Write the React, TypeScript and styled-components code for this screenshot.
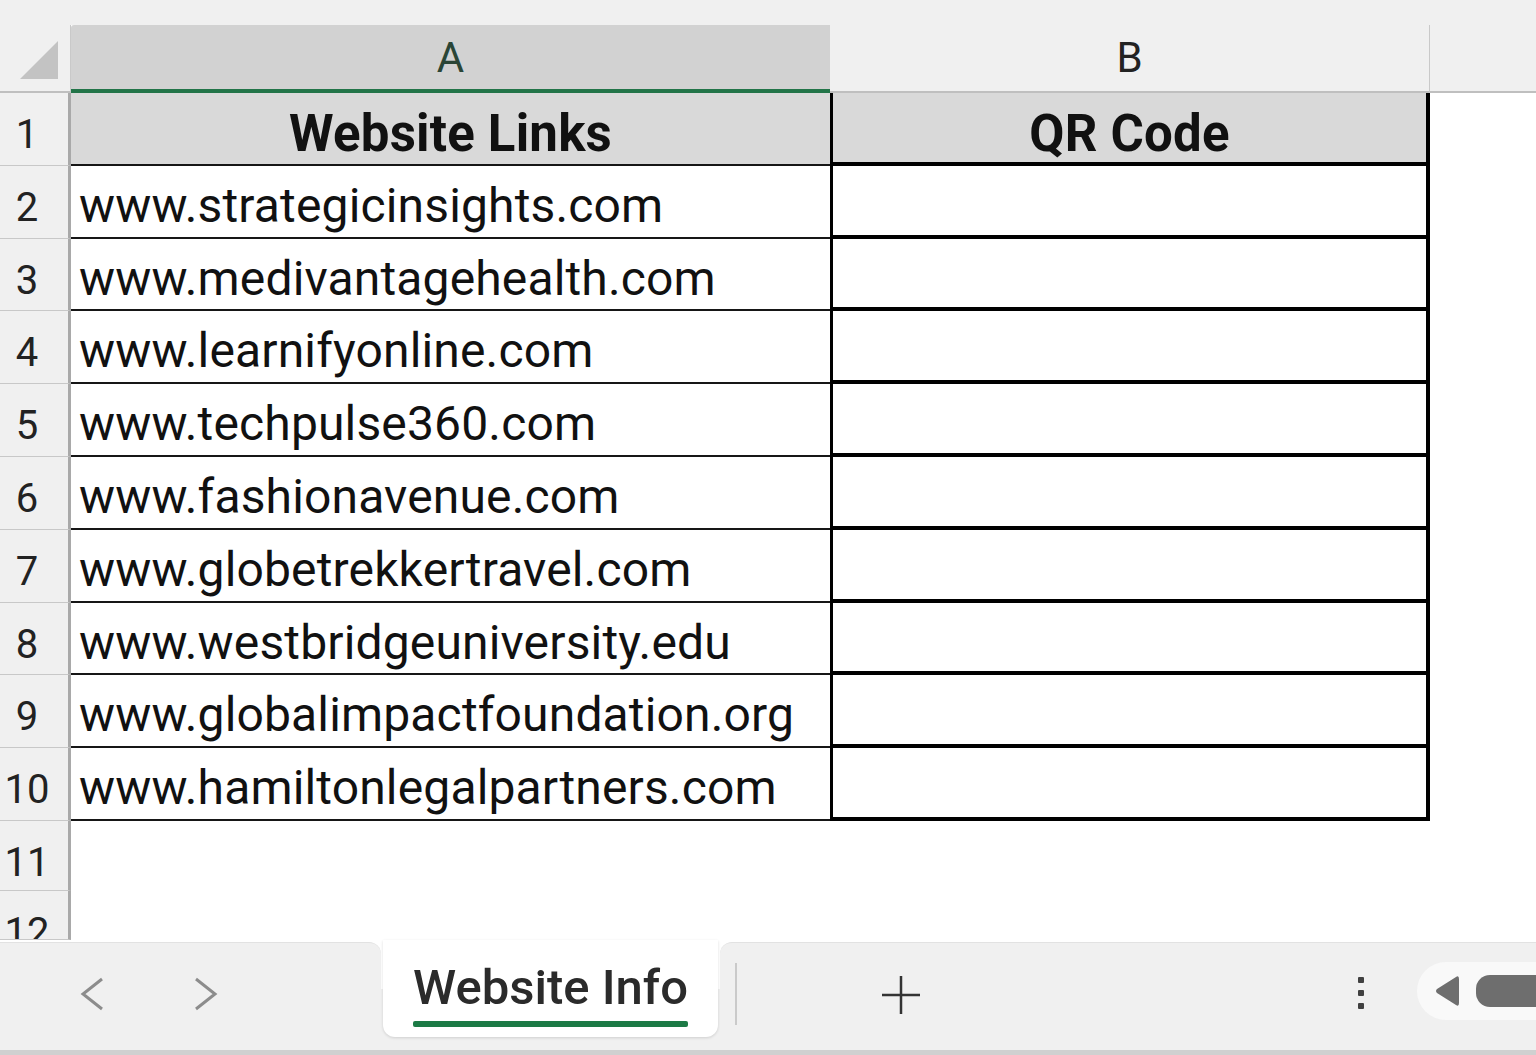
import React from 'react';
import styled, { createGlobalStyle } from 'styled-components';

const GlobalStyle = createGlobalStyle`
  html, body { margin: 0; padding: 0; background: #fff; }
  body { font-family: Roboto, "Noto Sans", "Liberation Sans", sans-serif; overflow: hidden; }
  * { box-sizing: border-box; }
`;

const Page = styled.div`
  width: 1536px;
  height: 1055px;
  display: flex;
  flex-direction: column;
  overflow: hidden;
  background: #fff;
`;

const TopBand = styled.div`
  flex: none;
  height: 25px;
  background: #f0f0f0;
`;

const Sheet = styled.div`
  flex: 1;
  min-height: 0;
  display: grid;
  grid-template-columns: 71px 759px 600px 1fr;
  grid-template-rows: 68px repeat(10, 72.8px) 70px 1fr;
  overflow: hidden;
`;

const Corner = styled.div`
  background: #f0f0f0;
  border-right: 1px solid #c9c9c9;
  border-bottom: 2px solid #bfbfbf;
  display: flex;
  justify-content: flex-end;
  align-items: flex-end;
  padding: 0 12px 12px 0;
`;

const ColHead = styled.div<{ $selected?: boolean }>`
  font-family: Roboto, "Noto Sans", sans-serif;
  font-size: 42px;
  line-height: 1;
  padding-top: 12px;
  text-align: center;
  background: ${(p) => (p.$selected ? '#d2d2d2' : '#f0f0f0')};
  color: ${(p) => (p.$selected ? '#2a4536' : '#222')};
  border-bottom: ${(p) => (p.$selected ? '4px solid #227448' : '2px solid #bfbfbf')};
  border-right: ${(p) => (p.$selected ? 'none' : '1px solid #c9c9c9')};
  border-top-left-radius: ${(p) => (p.$selected ? '3px' : '0')};
`;

const HeadFiller = styled.div`
  background: #f0f0f0;
  border-bottom: 2px solid #bfbfbf;
`;

const RowHead = styled.div`
  background: #f0f0f0;
  border-right: 3px solid #a9a9a9;
  border-bottom: 1px solid #c8c8c8;
  font-size: 40px;
  line-height: 1;
  padding: 22px 14px 0 0;
  text-align: center;
  color: #222;
  overflow: hidden;
  white-space: nowrap;
`;

const Cell = styled.div<{ $col: 'a' | 'b'; $head?: boolean }>`
  font-family: Roboto, "Noto Sans", sans-serif;
  font-size: ${(p) => (p.$head ? '51px' : '48px')};
  font-weight: ${(p) => (p.$head ? 700 : 400)};
  letter-spacing: ${(p) => (p.$head ? '0.2px' : '0.15px')};
  line-height: 1;
  padding-top: ${(p) => (p.$head ? '15px' : '16px')};
  padding-left: ${(p) => (p.$head ? '0' : '8px')};
  text-align: ${(p) => (p.$head ? 'center' : 'left')};
  background: ${(p) => (p.$head ? '#d9d9d9' : '#fff')};
  color: #111;
  white-space: nowrap;
  overflow: hidden;
  border-bottom: ${(p) => (p.$col === 'a' ? '2px solid #161616' : '4px solid #000')};
  border-left: ${(p) => (p.$col === 'b' ? '3px solid #000' : 'none')};
  border-right: ${(p) => (p.$col === 'b' ? '4px solid #000' : 'none')};
`;

const Blank = styled.div`
  background: #fff;
`;

const Footer = styled.div`
  flex: none;
  height: 115px;
  display: flex;
  flex-direction: column;
  background: #f0f0f0;
  border-bottom: 5px solid #d0d0d0;
`;

const TabRow = styled.div`
  height: 97px;
  display: flex;
  gap: 2px;
  background: linear-gradient(to bottom, #fff 50%, #f0f0f0 50%);
`;

const NavBlock = styled.div`
  width: 381px;
  margin-top: 2px;
  background: #f0f0f0;
  border-top: 1px solid #e2e2e2;
  border-top-right-radius: 12px;
  display: flex;
  align-items: center;
  gap: 90px;
  padding: 8px 0 0 80px;
`;

const Tab = styled.div`
  width: 335px;
  background: #fff;
  border-radius: 0 0 12px 12px;
  box-shadow: 0 1px 3px rgba(0, 0, 0, 0.14);
  display: flex;
  flex-direction: column;
  align-items: center;
  padding-top: 23px;
`;

const TabLabel = styled.div`
  font-family: Roboto, "Noto Sans", sans-serif;
  font-size: 49px;
  font-weight: 500;
  line-height: 1;
  color: #2b2b2b;
  display: flex;
  flex-direction: column;
  align-items: stretch;
`;

const TabUnderline = styled.div`
  height: 6px;
  margin-top: 9px;
  background: #1c7a45;
  border-radius: 2px;
`;

const RightBlock = styled.div`
  flex: 1;
  margin-top: 2px;
  background: #f0f0f0;
  border-top: 1px solid #e2e2e2;
  border-top-left-radius: 12px;
  display: flex;
  align-items: center;
  overflow: hidden;
  padding-left: 15px;
`;

const Divider = styled.div`
  flex: none;
  width: 2px;
  height: 62px;
  margin-top: 8px;
  background: #cacaca;
`;

const PlusButton = styled.div`
  flex: none;
  margin-left: 144px;
  margin-top: 10px;
  width: 40px;
  height: 40px;
  display: flex;
`;

const Dots = styled.div`
  flex: none;
  margin-left: 437px;
  margin-top: 6px;
  display: flex;
  flex-direction: column;
  gap: 7px;
`;

const Dot = styled.span`
  width: 6px;
  height: 6px;
  background: #404040;
  border-radius: 1px;
`;

const ScrollPill = styled.div`
  flex: none;
  width: 140px;
  margin-left: 53px;
  margin-top: 2px;
  height: 58px;
  background: #f9f9f9;
  border-radius: 29px 0 0 29px;
  display: flex;
  align-items: center;
  padding-left: 17px;
  gap: 16px;
`;

const ArrowIcon = styled.svg`
  flex: none;
  display: block;
`;

const Thumb = styled.div`
  flex: none;
  width: 90px;
  height: 32px;
  background: #6e6e6e;
  border-radius: 14px;
`;

const links = [
  'www.strategicinsights.com',
  'www.medivantagehealth.com',
  'www.learnifyonline.com',
  'www.techpulse360.com',
  'www.fashionavenue.com',
  'www.globetrekkertravel.com',
  'www.westbridgeuniversity.edu',
  'www.globalimpactfoundation.org',
  'www.hamiltonlegalpartners.com',
];

const Chevron = ({ dir }: { dir: 'left' | 'right' }) => (
  <ArrowIcon width="24" height="34" viewBox="0 0 24 34" fill="none">
    <polyline
      points={dir === 'left' ? '22,2 3,17 22,32' : '2,2 21,17 2,32'}
      stroke="#8c8c8c"
      strokeWidth="3"
      strokeLinejoin="miter"
    />
  </ArrowIcon>
);

export default function App() {
  return (
    <Page>
      <GlobalStyle />
      <TopBand />
      <Sheet>
        <Corner>
          <svg width="38" height="38" viewBox="0 0 38 38">
            <polygon points="0,38 38,38 38,0" fill="#c3c3c3" />
          </svg>
        </Corner>
        <ColHead $selected>A</ColHead>
        <ColHead>B</ColHead>
        <HeadFiller />

        <RowHead>1</RowHead>
        <Cell $col="a" $head>Website Links</Cell>
        <Cell $col="b" $head>QR Code</Cell>
        <Blank />

        {links.map((l, i) => (
          <React.Fragment key={l}>
            <RowHead>{i + 2}</RowHead>
            <Cell $col="a">{l}</Cell>
            <Cell $col="b" />
            <Blank />
          </React.Fragment>
        ))}

        {[11, 12].map((n) => (
          <React.Fragment key={n}>
            <RowHead>{n}</RowHead>
            <Blank />
            <Blank />
            <Blank />
          </React.Fragment>
        ))}
      </Sheet>
      <Footer>
        <TabRow>
          <NavBlock>
            <Chevron dir="left" />
            <Chevron dir="right" />
          </NavBlock>
          <Tab>
            <TabLabel>
              Website Info
              <TabUnderline />
            </TabLabel>
          </Tab>
          <RightBlock>
            <Divider />
            <PlusButton>
              <svg width="40" height="40" viewBox="0 0 40 40">
                <line x1="20" y1="1" x2="20" y2="39" stroke="#333" strokeWidth="2.5" />
                <line x1="1" y1="20" x2="39" y2="20" stroke="#333" strokeWidth="2.5" />
              </svg>
            </PlusButton>
            <Dots>
              <Dot />
              <Dot />
              <Dot />
            </Dots>
            <ScrollPill>
              <ArrowIcon width="26" height="32" viewBox="0 0 26 32">
                <path d="M22 2 Q25 0 25 4 L25 28 Q25 32 22 30 L3 18 Q1 16 3 14 Z" fill="#6e6e6e" />
              </ArrowIcon>
              <Thumb />
            </ScrollPill>
          </RightBlock>
        </TabRow>
      </Footer>
    </Page>
  );
}
